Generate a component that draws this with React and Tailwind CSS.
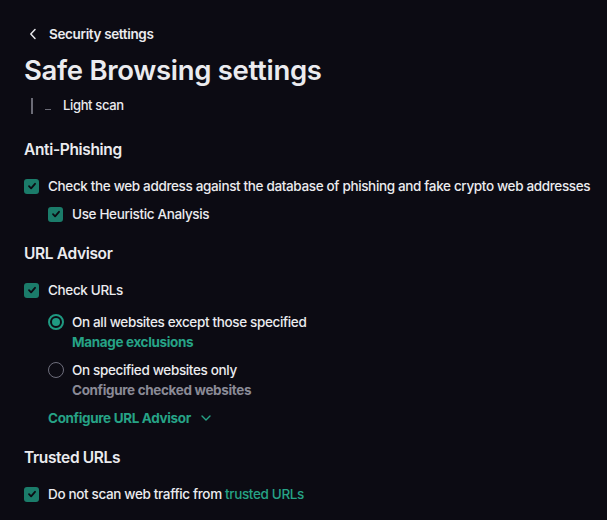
import React from "react";

const font = { fontFamily: "Inter, 'Noto Sans', sans-serif" };

function CheckBox() {
  return (
    <span className="w-[15px] h-[15px] rounded-[3px] bg-[#1b7c6a] flex items-center justify-center shrink-0">
      <svg width="10" height="10" viewBox="0 0 10 10" fill="none">
        <path d="M2 5.2 L4.1 7.3 L8 2.8" stroke="#0c0b13" strokeWidth="1.8" strokeLinecap="round" strokeLinejoin="round" />
      </svg>
    </span>
  );
}

function Radio({ on }) {
  return on ? (
    <span className="w-[16px] h-[16px] rounded-full border-2 border-[#1f9a82] flex items-center justify-center shrink-0">
      <span className="w-[8px] h-[8px] rounded-full bg-[#1f9a82]" />
    </span>
  ) : (
    <span className="w-[16px] h-[16px] rounded-full border-[1.5px] border-[#6e6e7c] shrink-0" />
  );
}

export default function App() {
  return (
    <div style={font} className="w-[607px] h-[520px] bg-[#0c0b13] text-[#ebebef] text-[13.5px] font-medium tracking-[-0.35px] px-6 pt-6 overflow-hidden">
      {/* back */}
      <div className="flex items-center h-5 gap-3 pl-[5px]">
        <svg width="8" height="12" viewBox="0 0 8 12" fill="none">
          <path d="M6 1.5 L1.8 6 L6 10.5" stroke="#e6e6ea" strokeWidth="1.5" strokeLinecap="round" strokeLinejoin="round" />
        </svg>
        <span className="font-semibold text-[13.5px]">Security settings</span>
      </div>

      <h1 className="mt-[10px] h-8 leading-8 text-[27.5px] font-semibold tracking-[-0.3px]">Safe Browsing settings</h1>

      <div className="mt-3 flex items-center h-4">
        <span className="ml-[7px] w-[2px] h-[16px] bg-[#6b6b76]" />
        <span className="ml-3 w-[6px] h-px bg-[#6b6b76] mt-[6px]" />
        <span className="ml-3 text-[13px]">Light scan</span>
      </div>

      {/* Anti-Phishing */}
      <h2 className="mt-[26px] h-5 leading-5 text-[15.5px] font-semibold">Anti-Phishing</h2>
      <label className="mt-4 flex items-center gap-[9px] h-5">
        <CheckBox />
        <span className="whitespace-nowrap">Check the web address against the database of phishing and fake crypto web addresses</span>
      </label>
      <label className="mt-2 ml-6 flex items-center gap-[9px] h-5">
        <CheckBox />
        <span>Use Heuristic Analysis</span>
      </label>

      {/* URL Advisor */}
      <h2 className="mt-5 h-5 leading-5 text-[15.5px] font-semibold">URL Advisor</h2>
      <label className="mt-4 flex items-center gap-[9px] h-5">
        <CheckBox />
        <span>Check URLs</span>
      </label>

      <div className="ml-6 mt-3">
        <div className="flex gap-2">
          <div className="h-5 flex items-center">
            <Radio on />
          </div>
          <div className="leading-5">
            <div>On all websites except those specified</div>
            <div className="text-[#26a386] font-bold">Manage exclusions</div>
          </div>
        </div>
        <div className="flex gap-2 mt-2">
          <div className="h-5 flex items-center">
            <Radio />
          </div>
          <div className="leading-5">
            <div>On specified websites only</div>
            <div className="text-[#8a8a96] font-bold">Configure checked websites</div>
          </div>
        </div>
        <div className="mt-2 h-5 flex items-center gap-[10px] text-[#26a386] font-bold">
          <span>Configure URL Advisor</span>
          <svg width="10" height="6" viewBox="0 0 10 6" fill="none">
            <path d="M1 1 L5 5 L9 1" stroke="#26a386" strokeWidth="1.4" strokeLinecap="round" strokeLinejoin="round" />
          </svg>
        </div>
      </div>

      {/* Trusted URLs */}
      <h2 className="mt-5 h-5 leading-5 text-[15.5px] font-semibold">Trusted URLs</h2>
      <label className="mt-4 flex items-center gap-[9px] h-5">
        <CheckBox />
        <span>
          Do not scan web traffic from <span className="text-[#26a386]">trusted URLs</span>
        </span>
      </label>
    </div>
  );
}
